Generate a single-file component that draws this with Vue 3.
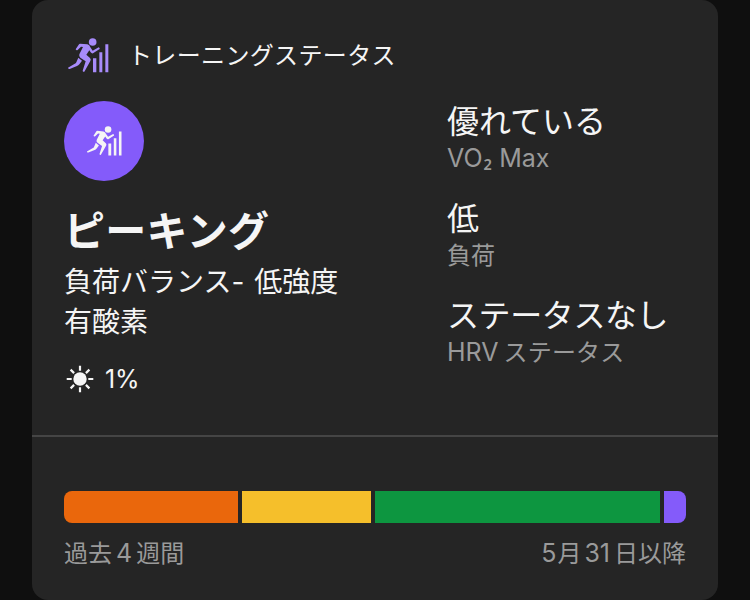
<script setup>
import { h } from 'vue'

const RunnerIcon = () =>
  h('svg', { viewBox: '53 53 123 105', fill: 'currentColor', 'aria-hidden': 'true' }, [
    h('circle', { cx: 127, cy: 65, r: 11.5 }),
    h('path', {
      d: 'M89 70 L111 72 Q118 74 120 81 L127 91 L145 81 Q149 83 148 86 L128 99 Q124 100 121 96 L117 90 L108 103 L119 113 Q123 117 120 122 L102 154 Q98 156 97 151 L106 123 L90 112 Q85 108 87 102 L98 80 L92 79 L82 89 Q78 91 76 87 L85 73 Q87 70 89 70 Z'
    }),
    h('path', { d: 'M84 112 L95 121 L87 132 Q84 136 80 137 L58 146 Q54 147 53 142 L77 128 Z' }),
    h('path', { d: 'M128 114h10v42h-10z M147 96h9v60h-9z M165 72h9v84h-9z' })
  ])

const metrics = [
  { value: '優れている', kind: 'vo2', parts: [{ text: 'VO', type: 'latin' }, { text: '₂', type: 'sub' }, { text: ' Max', type: 'latin' }] },
  { value: '低', kind: 'load', parts: [{ text: '負荷', type: 'kana' }] },
  { value: 'ステータスなし', kind: 'hrv', parts: [{ text: 'HRV', type: 'latin' }, { text: 'ステータス', type: 'kana' }] }
]

const segments = [
  { color: 'orange', width: 174 },
  { color: 'yellow', width: 129 },
  { color: 'green', width: 285 },
  { color: 'purple', width: 22 }
]
</script>

<template>
  <main class="page">
    <section class="card">
      <div class="top">
        <header class="header">
          <RunnerIcon class="header-icon" />
          <span class="header-text">トレーニングステータス</span>
        </header>
        <div class="columns">
          <div class="status">
            <div class="badge"><RunnerIcon class="badge-icon" /></div>
            <h1 class="title">ピーキング</h1>
            <p class="detail">負荷バランス<span class="dash">-</span> 低強度<br />有酸素</p>
            <div class="heat">
              <svg class="sun" viewBox="0 0 28 28" aria-hidden="true">
                <circle cx="14" cy="14" r="6.7" fill="currentColor" />
                <path
                  d="M14 .7v5M14 22.3v5M.7 14h5M22.3 14h5M4.6 4.6l3.5 3.5M19.9 19.9l3.5 3.5M4.6 23.4l3.5-3.5M19.9 8.1l3.5-3.5"
                  stroke="currentColor"
                  stroke-width="2.2"
                />
              </svg>
              <span>1%</span>
            </div>
          </div>
          <dl class="metrics">
            <div v-for="m in metrics" :key="m.kind" class="metric" :class="m.kind">
              <dd class="value">{{ m.value }}</dd>
              <dt class="label"><span v-for="p in m.parts" :key="p.text" :class="p.type">{{ p.text }}</span></dt>
            </div>
          </dl>
        </div>
      </div>
      <div class="bottom">
        <div class="bar">
          <span
            v-for="s in segments"
            :key="s.color"
            class="segment"
            :class="s.color"
            :style="{ width: s.width + 'px' }"
          ></span>
        </div>
        <div class="range">
          <span class="from">過去<span class="latin four">4</span>週間</span>
          <span class="since"><span class="latin month">5</span>月<span class="latin day">31</span>日以降</span>
        </div>
      </div>
    </section>
  </main>
</template>

<style>
body {
  margin: 0;
  background: #0f0f0f;
}
</style>

<style scoped>
.page {
  box-sizing: border-box;
  height: 600px;
  padding: 0 32px;
  overflow: hidden;
  background: #0f0f0f;
  color: #f5f5f5;
  font-family: Inter, "Noto Sans CJK JP", sans-serif;
}
.card {
  box-sizing: border-box;
  width: 686px;
  height: 600px;
  border-radius: 16px;
  background: #252525;
}
.top {
  box-sizing: border-box;
  height: 437px;
  padding: 35px 32px 0;
  border-bottom: 2px solid #454545;
}
.header {
  display: flex;
  align-items: center;
  height: 40px;
  padding-left: 4px;
  margin-bottom: 26px;
}
.header-icon {
  width: 41px;
  height: 35px;
  color: #a78bfa;
}
.header-text {
  margin-left: 19px;
  padding-top: 1px;
  font-size: 24px;
  line-height: 40px;
  letter-spacing: 0.35px;
}
.columns {
  display: flex;
}
.status {
  width: 383px;
}
.badge {
  display: flex;
  align-items: center;
  justify-content: center;
  width: 80px;
  height: 80px;
  border-radius: 50%;
  background: #845bfa;
}
.badge-icon {
  width: 37px;
  height: 30px;
  margin-left: 1px;
}
.title {
  margin: 24px 0 0;
  font-size: 41px;
  font-weight: 700;
  line-height: 52px;
  letter-spacing: 0.3px;
  white-space: nowrap;
}
.detail {
  margin: 5px 0 0;
  font-size: 28px;
  line-height: 40px;
  white-space: nowrap;
}
.dash {
  margin-right: 2px;
}
.heat {
  display: flex;
  align-items: center;
  height: 32px;
  margin: 21px 0 0 2px;
  font-size: 25px;
  letter-spacing: -0.1px;
}
.sun {
  width: 28px;
  height: 28px;
  margin-right: 11px;
}
.metrics {
  margin: 1px 0 0;
  white-space: nowrap;
}
.metric {
  height: 97px;
}
.value {
  margin: 0;
  font-size: 32px;
  line-height: 40px;
}
.hrv .value {
  letter-spacing: -0.4px;
}
.label {
  font-size: 24px;
  line-height: 34px;
  color: #9a9a9a;
}
.latin {
  font-size: 25px;
  line-height: 1;
  white-space: pre;
}
.sub {
  margin-left: 1px;
  font-family: "Noto Sans", sans-serif;
  font-weight: 500;
  line-height: 1;
}
.hrv .latin {
  margin-right: 5px;
}
.hrv .kana {
  letter-spacing: 0.2px;
}
.bottom {
  padding: 54px 32px 0;
}
.bar {
  display: flex;
  gap: 4px;
  height: 32px;
  border-radius: 8px;
  overflow: hidden;
}
.segment {
  flex: none;
}
.orange {
  background: #ea670c;
}
.yellow {
  background: #f5bf2b;
}
.green {
  background: #0d9640;
}
.purple {
  background: #845bfa;
}
.range {
  display: flex;
  justify-content: space-between;
  margin-top: 14px;
  font-size: 24px;
  line-height: 34px;
  color: #9a9a9a;
}
.four {
  margin: 0 4px;
}
.month {
  margin-right: 1px;
}
.day {
  margin: 0 4px 0 3px;
}
</style>
